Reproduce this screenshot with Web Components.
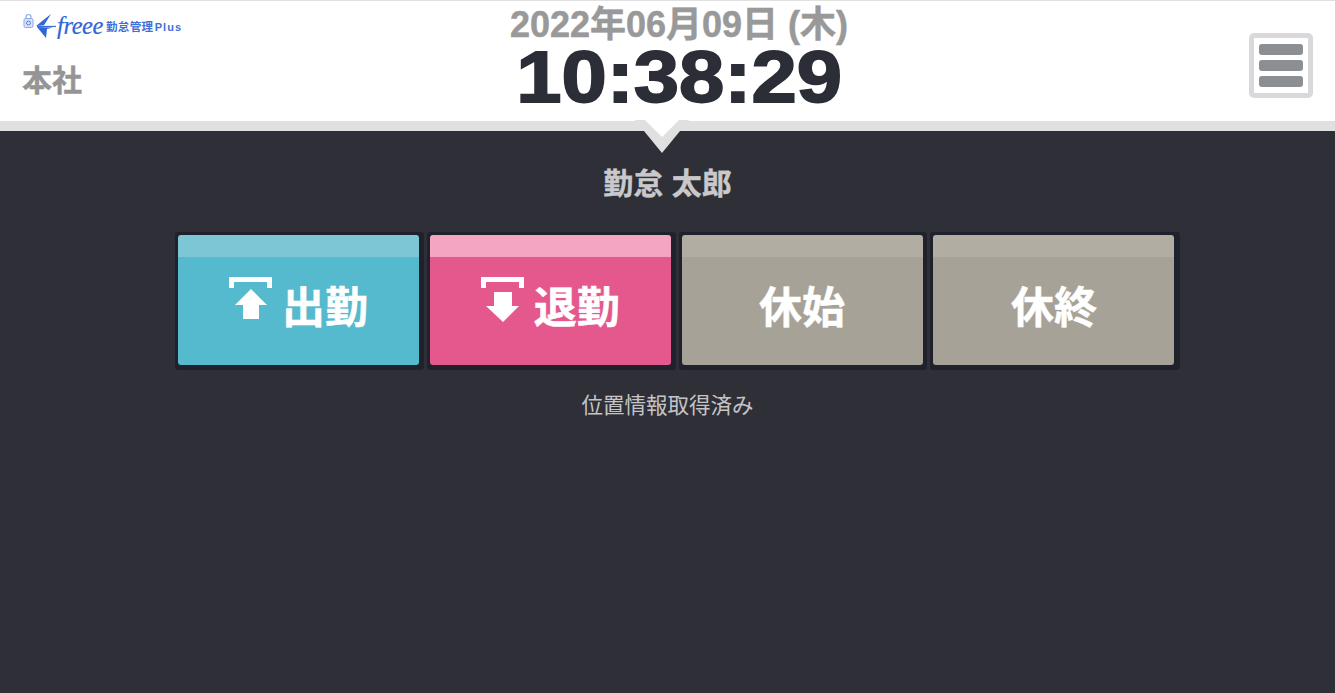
<!DOCTYPE html>
<html lang="ja">
<head>
<meta charset="utf-8">
<title>勤怠管理 Plus</title>
<style>
  html, body { margin: 0; height: 100%; }
  body {
    background: #2f2f38;
    font-family: "Liberation Sans", "Noto Sans CJK JP", sans-serif;
    overflow: hidden;
  }
</style>
</head>
<body>
<app-header></app-header>
<app-main>
  <user-name>勤怠 太郎</user-name>
  <stamp-buttons>
    <stamp-button kind="in">出勤</stamp-button>
    <stamp-button kind="out">退勤</stamp-button>
    <stamp-button>休始</stamp-button>
    <stamp-button>休終</stamp-button>
  </stamp-buttons>
  <geo-status>位置情報取得済み</geo-status>
</app-main>

<script>
const FONT = '"Liberation Sans", "Noto Sans CJK JP", sans-serif';

class BrandLogo extends HTMLElement {
  constructor() {
    super();
    this.attachShadow({ mode: 'open' });
  }
  connectedCallback() {
    this.shadowRoot.innerHTML = `
      <style>
        :host { display: flex; align-items: center; height: 25px; color: #3f70d9; }
        svg { display: block; flex: none; }
        .script {
          font: italic 24.5px/25px "Liberation Serif", serif;
          letter-spacing: -0.4px;
          margin-left: 1px;
          color: #2f66d6;
          -webkit-text-stroke: 0.2px #2f66d6;
        }
        .name {
          font: bold 11.5px/14px ${FONT};
          letter-spacing: 0.3px;
          margin-left: 3px;
          margin-top: 2px;
          white-space: nowrap;
        }
        .plus { letter-spacing: 1px; font-size: 11px; margin-left: -2px; }
      </style>
      <svg width="34" height="25" viewBox="0 0 34 25">
        <rect x="2" y="5.5" width="9" height="9" rx="1.5" fill="#dbe5f9" stroke="#8aa8e8"/>
        <path d="M4 5.5V4a2.5 2.5 0 0 1 5 0V5.5" fill="none" stroke="#8aa8e8" stroke-width="1.2"/>
        <circle cx="6.5" cy="10" r="2" fill="none" stroke="#4f7ddd"/>
        <path d="M14 13 L29 1 L22 12.2 Z" fill="#2f66d6"/>
        <path d="M15 14 L24 25 L25 16 L31 14.4 Z" fill="#2f66d6"/>
        <path d="M15 13.4 H34" stroke="#2f66d6" stroke-width="1.1" fill="none"/>
      </svg>
      <span class="script">freee</span>
      <span class="name">勤怠管理 <span class="plus">Plus</span></span>
    `;
  }
}

class MenuButton extends HTMLElement {
  constructor() {
    super();
    this.attachShadow({ mode: 'open' });
  }
  connectedCallback() {
    this.shadowRoot.innerHTML = `
      <style>
        :host {
          display: flex;
          flex-direction: column;
          gap: 5px;
          box-sizing: border-box;
          width: 64px;
          height: 65px;
          padding: 6px 5px;
          border: 5px solid #d9d9db;
          border-radius: 5px;
          background: #fff;
        }
        i { display: block; height: 11px; border-radius: 3px; background: #8b8e93; }
      </style>
      <i></i><i></i><i></i>
    `;
  }
}

class AppHeader extends HTMLElement {
  constructor() {
    super();
    this.attachShadow({ mode: 'open' });
  }
  connectedCallback() {
    this.shadowRoot.innerHTML = `
      <style>
        :host {
          display: grid;
          grid-template-columns: 200px 1fr 177px;
          position: relative;
          box-sizing: border-box;
          height: 131px;
          background: #fff;
          border-top: 1px solid #e0e0e0;
          border-bottom: 10px solid #e0e0e0;
          font-family: ${FONT};
        }
        .left { padding: 12px 0 0 22px; }
        .office {
          margin-top: 24px;
          font-size: 30px;
          line-height: 38px;
          font-weight: bold;
          color: #959595;
          -webkit-text-stroke: 0.4px #959595;
        }
        .center { text-align: center; }
        .date {
          margin-top: 4px;
          font-size: 36px;
          line-height: 39px;
          font-weight: bold;
          color: #999;
          white-space: nowrap;
          -webkit-text-stroke: 0.5px #999;
        }
        .time {
          display: inline-block;
          font-size: 73px;
          line-height: 66px;
          font-weight: bold;
          color: #2b2d37;
          white-space: nowrap;
          -webkit-text-stroke: 1.8px #2b2d37;
          transform: scaleX(1.115);
        }
        .right {
          display: flex;
          justify-content: flex-end;
          padding: 32px 22px 0 0;
        }
        .pointer {
          position: absolute;
          left: 635px;
          top: 119px;
          display: block;
        }
      </style>
      <div class="left">
        <brand-logo></brand-logo>
        <div class="office">本社</div>
      </div>
      <div class="center">
        <div class="date">2022年06月09日 (木)</div>
        <div class="time">10:38:29</div>
      </div>
      <div class="right"><menu-button></menu-button></div>
      <svg class="pointer" width="54" height="33" viewBox="0 0 54 33">
        <path d="M0 0H54L27 33Z" fill="#e0e0e0"/>
        <path d="M10 0H44L27 17Z" fill="#fff"/>
      </svg>
    `;
  }
}

class AppMain extends HTMLElement {
  constructor() {
    super();
    this.attachShadow({ mode: 'open' });
  }
  connectedCallback() {
    this.shadowRoot.innerHTML = `
      <style>
        :host { display: block; background: #2f2f38; font-family: ${FONT}; }
      </style>
      <slot></slot>
    `;
  }
}

class UserName extends HTMLElement {
  constructor() {
    super();
    this.attachShadow({ mode: 'open' });
  }
  connectedCallback() {
    this.shadowRoot.innerHTML = `
      <style>
        :host {
          display: block;
          padding-top: 31px;
          height: 70px;
          box-sizing: border-box;
          text-align: center;
          font-size: 30px;
          line-height: 44px;
          font-weight: bold;
          color: #c9c9cb;
          -webkit-text-stroke: 0.4px #c9c9cb;
        }
      </style>
      <slot></slot>
    `;
  }
}

class StampButtons extends HTMLElement {
  constructor() {
    super();
    this.attachShadow({ mode: 'open' });
  }
  connectedCallback() {
    this.shadowRoot.innerHTML = `
      <style>
        :host {
          display: grid;
          grid-template-columns: repeat(3, 248.8px) 250px;
          gap: 3px;
          margin: 31px 0 0 175px;
        }
      </style>
      <slot></slot>
    `;
  }
}

const STAMP_ICONS = {
  in: `<svg width="43" height="42" viewBox="0 0 43 42">
    <path d="M0 11V0H43V11H38V5H5V11Z" fill="#fff"/>
    <path d="M22 12L38 28H30V42H14V28H6Z" fill="#fff"/>
  </svg>`,
  out: `<svg width="43" height="45" viewBox="0 0 43 45">
    <path d="M0 11V0H43V11H38V5H5V11Z" fill="#fff"/>
    <path d="M13 15H31V29H38L22 45L5 29H13Z" fill="#fff"/>
  </svg>`
};

const STAMP_COLORS = {
  in: ['#7cc6d6', '#56bace'],
  out: ['#f4a5c2', '#e4588e'],
  none: ['#b1ada2', '#a7a297']
};

class StampButton extends HTMLElement {
  constructor() {
    super();
    this.attachShadow({ mode: 'open' });
  }
  connectedCallback() {
    const kind = this.getAttribute('kind');
    const [top, base] = STAMP_COLORS[kind] || STAMP_COLORS.none;
    this.shadowRoot.innerHTML = `
      <style>
        :host {
          display: block;
          box-sizing: border-box;
          padding: 3px 0 5px 3px;
          background: #1f212d;
          border-radius: 3px;
        }
        button {
          display: flex;
          align-items: center;
          justify-content: center;
          gap: 10px;
          box-sizing: border-box;
          width: 241px;
          height: 130px;
          padding: 15px 0 0;
          border: 0;
          border-radius: 3px;
          background: linear-gradient(${top} 22px, ${base} 22px);
          color: #fff;
          font-family: ${FONT};
          font-size: 43px;
          line-height: 50px;
          font-weight: bold;
          -webkit-text-stroke: 0.5px #fff;
        }
        .icon { display: block; margin-top: -20px; height: 42px; }
        .icon svg { display: block; }
      </style>
      <button>
        ${STAMP_ICONS[kind] ? `<span class="icon">${STAMP_ICONS[kind]}</span>` : ''}
        <slot></slot>
      </button>
    `;
  }
}

class GeoStatus extends HTMLElement {
  constructor() {
    super();
    this.attachShadow({ mode: 'open' });
  }
  connectedCallback() {
    this.shadowRoot.innerHTML = `
      <style>
        :host {
          display: block;
          margin-top: 21px;
          text-align: center;
          font-size: 21.5px;
          line-height: 30px;
          color: #c4c4c6;
        }
      </style>
      <slot></slot>
    `;
  }
}

customElements.define('brand-logo', BrandLogo);
customElements.define('menu-button', MenuButton);
customElements.define('app-header', AppHeader);
customElements.define('app-main', AppMain);
customElements.define('user-name', UserName);
customElements.define('stamp-buttons', StampButtons);
customElements.define('stamp-button', StampButton);
customElements.define('geo-status', GeoStatus);
</script>
</body>
</html>
